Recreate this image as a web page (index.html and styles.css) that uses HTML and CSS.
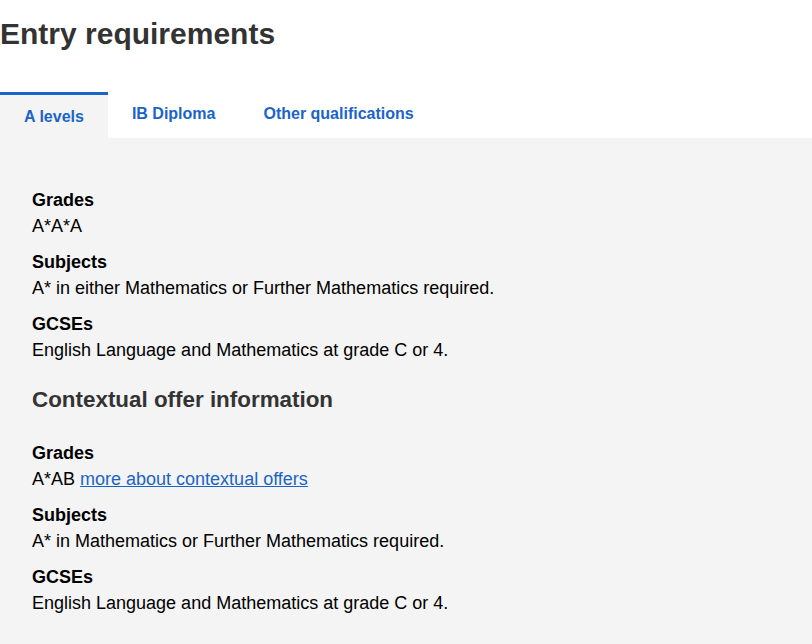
FILE: index.html
```html
<!DOCTYPE html>
<html>
<head>
<meta charset="utf-8">
<link rel="stylesheet" href="styles.css">
</head>
<body>
<h1 class="title">Entry requirements</h1>
<div class="tabs">
  <div class="tab active">A levels</div>
  <div class="tab">IB Diploma</div>
  <div class="tab">Other qualifications</div>
</div>
<div class="panel">
  <dl class="reqs">
    <dt>Grades</dt>
    <dd>A*A*A</dd>
    <dt>Subjects</dt>
    <dd>A* in either Mathematics or Further Mathematics required.</dd>
    <dt>GCSEs</dt>
    <dd>English Language and Mathematics at grade C or 4.</dd>
  </dl>
  <h2 class="subtitle">Contextual offer information</h2>
  <dl class="reqs">
    <dt>Grades</dt>
    <dd>A*AB <a class="link" href="#">more about contextual offers</a></dd>
    <dt>Subjects</dt>
    <dd>A* in Mathematics or Further Mathematics required.</dd>
    <dt>GCSEs</dt>
    <dd>English Language and Mathematics at grade C or 4.</dd>
  </dl>
</div>
</body>
</html>
```
FILE: styles.css
```css
html, body {
  margin: 0;
  padding: 0;
  background: #ffffff;
  font-family: "Liberation Sans", Arial, sans-serif;
  color: #000;
}
.title {
  margin: 0;
  padding: 16px 0 0 0;
  font-size: 30px;
  line-height: 36px;
  font-weight: bold;
  color: #333333;
}
.tabs {
  display: flex;
  margin-top: 40px;
}
.tab {
  padding: 11px 24px 10px;
  font-size: 16px;
  font-weight: bold;
  line-height: 22px;
  color: #1a64c8;
}
.tab.active {
  background: #f4f4f4;
  border-top: 3px solid #1a64c8;
}
.panel {
  background: #f4f4f4;
  padding: 49px 32px 20px;
  min-height: 460px;
}
.reqs {
  margin: 0;
}
.reqs dt {
  font-weight: bold;
  font-size: 18px;
  line-height: 26px;
}
.reqs dd {
  margin: 0 0 10px 0;
  font-size: 18px;
  line-height: 26px;
}
.subtitle {
  margin: 24px 0 27px;
  font-size: 22.4px;
  line-height: 26px;
  font-weight: bold;
  color: #333333;
}
.link {
  color: #1a64c8;
  text-decoration: underline;
}
```
